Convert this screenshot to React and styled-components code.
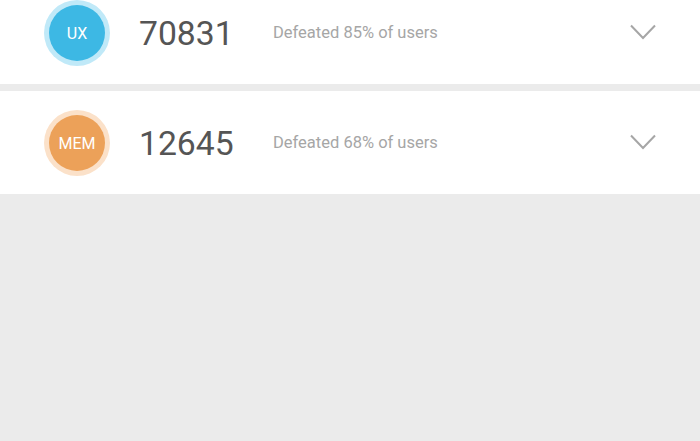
import React from 'react';
import styled, {createGlobalStyle} from 'styled-components';

const Global = createGlobalStyle`
  html, body {
    margin: 0;
    padding: 0;
    background: #ebebeb;
    font-family: Roboto, "Liberation Sans", sans-serif;
  }
`;

const Page = styled.div`
  width: 700px;
  height: 441px;
  overflow: hidden;
  background: #ebebeb;
  display: flex;
  flex-direction: column;
  gap: 7px;
`;

const Row = styled.div`
  height: ${p => p.h}px;
  padding: ${p => p.top}px 44px 0;
  box-sizing: border-box;
  background: #fff;
  display: flex;
  align-items: flex-start;
`;

const Badge = styled.div`
  width: 56px;
  height: 56px;
  margin: 5px;
  flex: none;
  border-radius: 50%;
  background: ${p => p.color};
  box-shadow: 0 0 0 5px ${p => p.ring};
  color: #fff;
  font-size: 16px;
  display: flex;
  align-items: center;
  justify-content: center;
`;

const Score = styled.div`
  width: 134px;
  margin-left: 29px;
  height: 66px;
  line-height: 67px;
  font-size: 33.7px;
  color: #555;
`;

const Desc = styled.div`
  flex: 1;
  height: 66px;
  line-height: 66px;
  font-size: 16.5px;
  color: #a6a6a6;
`;

const Chevron = styled.svg`
  width: 26px;
  height: 16px;
  margin-top: 24px;
  flex: none;
`;

const results = [
	{label: 'UX', score: 70831, pct: 85, color: '#3db8e4', ring: '#c0e9f8', h: 84, top: 0},
	{label: 'MEM', score: 12645, pct: 68, color: '#eca159', ring: '#fbe1c9', h: 103, top: 19},
];

export default function App() {
	return (
		<Page>
			<Global/>
			{results.map(r => (
				<Row key={r.label} h={r.h} top={r.top}>
					<Badge color={r.color} ring={r.ring}>{r.label}</Badge>
					<Score>{r.score}</Score>
					<Desc>Defeated {r.pct}% of users</Desc>
					<Chevron viewBox="0 0 26 16">
						<path d="M1 1.5 L13 14 L25 1.5" fill="none" stroke="#a6a6a6" strokeWidth="2"/>
					</Chevron>
				</Row>
			))}
		</Page>
	);
}
